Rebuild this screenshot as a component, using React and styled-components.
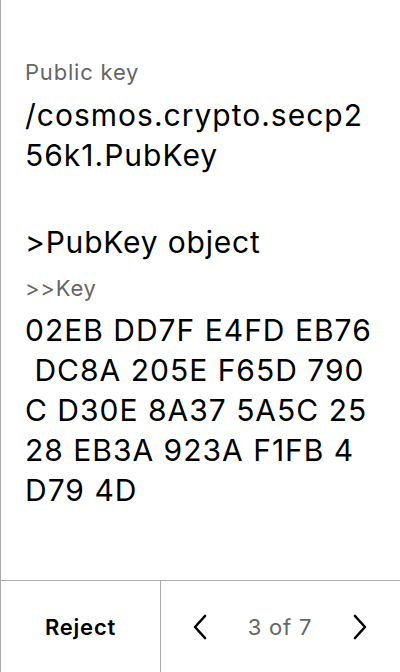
import React from "react";
import styled, { createGlobalStyle } from "styled-components";

const GlobalStyle = createGlobalStyle`
  * {
    box-sizing: border-box;
  }
  body {
    margin: 0;
    font-family: Inter, "Noto Sans", sans-serif;
    letter-spacing: 0.8px;
    background: #fff;
    color: #000;
  }
`;

const Screen = styled.div`
  height: 100vh;
  display: flex;
  flex-direction: column;
  border-left: 1px solid #a9a9a9;
`;

const Content = styled.div`
  flex: 1;
  padding: 57px 25px 0 24px;
`;

const Label = styled.div`
  font-size: 22px;
  line-height: 30px;
  color: #666;
  margin-bottom: ${(p) => p.gap}px;
`;

const Value = styled.div`
  font-size: 30px;
  line-height: 40px;
  letter-spacing: 1px;
`;

// each wrapped row of a long value, spaces kept as shown on the device
const ValueLine = styled.div`
  white-space: pre;
`;

const Heading = styled.div`
  font-size: 30px;
  line-height: 40px;
  margin-top: 47px;
  margin-bottom: 11px;
`;

const Footer = styled.div`
  height: 92px;
  border-top: 1px solid #a9a9a9;
  display: flex;
`;

const RejectButton = styled.button`
  width: 160px;
  border: none;
  border-right: 1px solid #a9a9a9;
  background: transparent;
  font-family: inherit;
  letter-spacing: inherit;
  font-size: 22px;
  font-weight: 600;
  color: #000;
  padding: 0;
`;

const Pager = styled.div`
  flex: 1;
  display: flex;
  align-items: center;
  justify-content: space-between;
  padding: 0 31px 0 30px;
`;

const PageCount = styled.span`
  font-size: 22px;
  color: #666;
`;

const Chevron = ({ dir }) => (
  <svg width="18" height="26" viewBox="0 0 18 26" fill="none">
    <path
      d={dir === "left" ? "M14 2 L4 13 L14 24" : "M4 2 L14 13 L4 24"}
      stroke="#000"
      strokeWidth="2.6"
      strokeLinecap="round"
      strokeLinejoin="round"
    />
  </svg>
);

const typeLines = ["/cosmos.crypto.secp2", "56k1.PubKey"];
const keyLines = [
  "02EB DD7F E4FD EB76",
  " DC8A 205E F65D 790",
  "C D30E 8A37 5A5C 25",
  "28 EB3A 923A F1FB 4",
  "D79 4D",
];

const App = () => {
  return (
    <Screen>
      <GlobalStyle />
      <Content>
        <Label gap={8}>Public key</Label>
        <Value>
          {typeLines.map((l, i) => (
            <ValueLine key={i}>{l}</ValueLine>
          ))}
        </Value>
        <Heading>&gt;PubKey object</Heading>
        <Label gap={7}>&gt;&gt;Key</Label>
        <Value>
          {keyLines.map((l, i) => (
            <ValueLine key={i}>{l}</ValueLine>
          ))}
        </Value>
      </Content>
      <Footer>
        <RejectButton>Reject</RejectButton>
        <Pager>
          <Chevron dir="left" />
          <PageCount>3 of 7</PageCount>
          <Chevron dir="right" />
        </Pager>
      </Footer>
    </Screen>
  );
};

export default App;
